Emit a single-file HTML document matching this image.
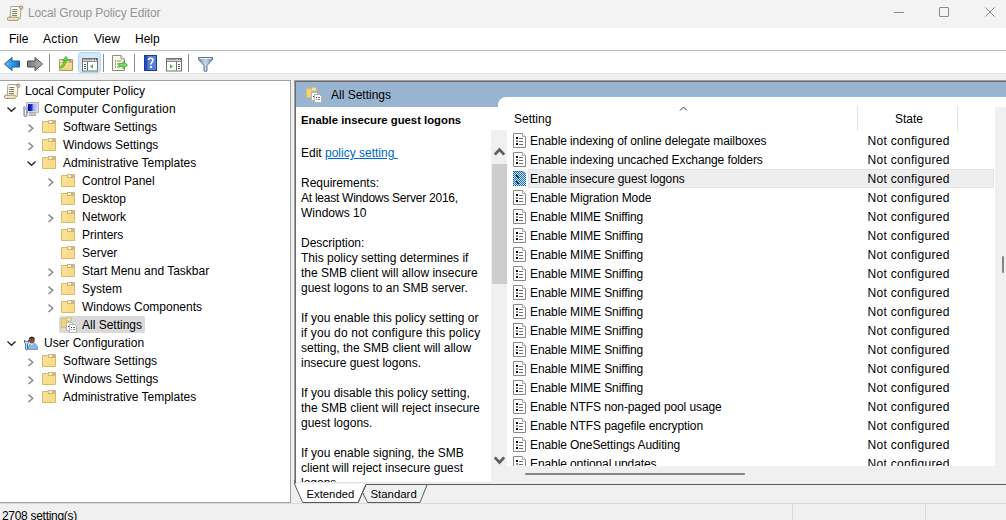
<!DOCTYPE html>
<html><head><meta charset="utf-8">
<style>
*{margin:0;padding:0;box-sizing:border-box}
html,body{width:1006px;height:520px;overflow:hidden;background:#f0f0f0;font-family:"Liberation Sans",sans-serif;font-size:12px;color:#000}
.a{position:absolute}
.t{position:absolute;white-space:nowrap;line-height:12px;font-size:12px}
svg{position:absolute;overflow:visible}
</style></head><body>
<div class="a" style="left:0;top:0;width:1006px;height:28px;background:#f3f3f3"></div>
<svg style="left:5px;top:3.5px" width="20" height="18" viewBox="0 0 20 18" ><path d="M6 2.5H16.2L15.2 14.5H5Z" fill="#f8f3dc" stroke="#aaa38a"/><path d="M6.3 3.2H15.5L15.2 5H6Z" fill="#fcfaee"/><path d="M7.4 5.5H12.2M7.3 7.5H12.1M7.2 9.5H12M7.1 11.5H11.9" stroke="#7c7c7c"/><circle cx="16.3" cy="3.6" r="1.6" fill="#ddd5b5" stroke="#8f8a78"/><rect x="2.3" y="13.2" width="11.6" height="3.2" rx="1.6" fill="#f2e8c4" stroke="#9d9677"/><circle cx="13.2" cy="14.8" r="1" fill="#d3caa6"/></svg>
<div class="t" style="left:28px;top:7px;color:#959595;letter-spacing:-0.12px">Local Group Policy Editor</div>
<div class="a" style="left:894px;top:12px;width:10px;height:1px;background:#8a8a8a"></div>
<div class="a" style="left:939px;top:7px;width:10px;height:10px;border:1px solid #8a8a8a;border-radius:1px"></div>
<svg style="left:985px;top:7px" width="10" height="10"><path d="M0.5 0.5L9.5 9.5M9.5 0.5L0.5 9.5" stroke="#8a8a8a" stroke-width="1"/></svg>
<div class="a" style="left:0;top:28px;width:1006px;height:22px;background:#fff"></div>
<div class="t" style="left:9px;top:33px">File</div>
<div class="t" style="left:43px;top:33px;letter-spacing:0.3px">Action</div>
<div class="t" style="left:94px;top:33px">View</div>
<div class="t" style="left:135px;top:33px">Help</div>
<div class="a" style="left:0;top:50px;width:1006px;height:1px;background:#bcbcbc"></div>
<div class="a" style="left:0;top:51px;width:1006px;height:22px;background:#fff"></div>
<div class="a" style="left:0;top:73px;width:1006px;height:1px;background:#e3e3e3"></div>
<div class="a" style="left:0;top:80px;width:291px;height:423px;background:#fff;border-top:1px solid #a0a0a0;border-right:1px solid #a0a0a0;border-bottom:1px solid #a0a0a0"></div>
<div class="a" style="left:294px;top:80px;width:712px;height:404px;border-top:1px solid #a0a0a0;border-left:1px solid #a0a0a0;background:#696969"></div>
<div class="a" style="left:296px;top:82px;width:710px;height:402px;background:#f0f0f0"></div>
<div class="a" style="left:296px;top:82px;width:710px;height:25px;background:#99b4d1"></div>
<div class="t" style="left:331px;top:89px">All Settings</div>
<svg style="left:3.5px;top:56.5px" width="17" height="15" viewBox="0 0 17 15" ><defs><linearGradient id="gb" x1="0" y1="0" x2="1" y2="0"><stop offset="0" stop-color="#5cc0f5"/><stop offset="1" stop-color="#0f6fc7"/></linearGradient></defs><path d="M0.5 7L8 0.5V4H15.5V10H8V13.5Z" fill="url(#gb)" stroke="#1d5f9e"/></svg>
<svg style="left:26.5px;top:56.5px" width="17" height="15" viewBox="0 0 17 15" ><defs><linearGradient id="gf" x1="0" y1="0" x2="1" y2="0"><stop offset="0" stop-color="#7a7a7a"/><stop offset="1" stop-color="#b5b5b5"/></linearGradient></defs><path d="M15.5 7L8 0.5V4H0.5V10H8V13.5Z" fill="url(#gf)" stroke="#4e4e4e"/></svg>
<div class="a" style="left:49px;top:54px;width:1px;height:18px;background:#8a8a8a"></div>
<svg style="left:59px;top:56px" width="15" height="16" viewBox="0 0 15 16" ><defs><linearGradient id="gup" x1="0" y1="0" x2="0" y2="1"><stop offset="0" stop-color="#fbe6ae"/><stop offset="1" stop-color="#f3cf78"/></linearGradient></defs><path d="M0.5 3.5H13.5V14.5H0.5Z" fill="url(#gup)" stroke="#b8975a"/><path d="M1 4H13V6.5H1Z" fill="#f8edd0"/><path d="M1 6.5H13" stroke="#d9b970"/><rect x="10" y="4" width="2.5" height="2" fill="#a89a80"/><path d="M2.5 11C4.5 9.8 5.8 7.5 6.4 4.6" stroke="#2f9e22" stroke-width="2.6" stroke-linecap="round" fill="none"/><path d="M2.5 11C4.5 9.8 5.8 7.5 6.4 4.6" stroke="#62dc48" stroke-width="1.5" stroke-linecap="round" fill="none"/><path d="M3.4 5L6.8 0.4L9.8 4.6Z" fill="#5fd946" stroke="#2f9e22" stroke-width="0.7"/></svg>
<div class="a" style="left:78px;top:52px;width:23px;height:21px;background:#d3e8f8;border:1px solid #b3d8f5;border-radius:3px"></div>
<svg style="left:82px;top:58px" width="17" height="14" viewBox="0 0 17 14" ><rect x="0.5" y="0.5" width="15" height="12.5" fill="#fff" stroke="#707070"/><rect x="1" y="1" width="14" height="2" fill="#d4d4d4"/><path d="M1.5 1.5H10.5" stroke="#9a9a9a"/><rect x="12" y="1" width="1" height="1" fill="#555"/><rect x="14" y="1" width="1" height="1" fill="#555"/><path d="M1 3.5H15" stroke="#8a8a8a"/><path d="M5.5 4V12.5" stroke="#707070"/><path d="M2 6.5H4M2 8.5H4M2 10.5H4" stroke="#4d5f86"/><path d="M11 6.3L8 8.4L11 10.5Z" fill="#3cb43c"/></svg>
<div class="a" style="left:103px;top:54px;width:1px;height:18px;background:#8a8a8a"></div>
<svg style="left:112px;top:55px" width="17" height="17" viewBox="0 0 17 17" ><path d="M0.5 0.5H9L12.5 4V15.5H0.5Z" fill="#fbf8e6" stroke="#8c8c80"/><path d="M9 0.5V4H12.5" fill="#fff" stroke="#8c8c80"/><rect x="3" y="5.5" width="1" height="1" fill="#333"/><rect x="3" y="8.5" width="1" height="1" fill="#333"/><rect x="3" y="11.5" width="1" height="1" fill="#333"/><path d="M5 6H9M5 9H8M5 12H8" stroke="#888"/><path d="M7 8.5H11V6.5L15.5 10L11 13.5V11.5H7Z" fill="#6fe05a" stroke="#3aa52a" stroke-width="0.8"/></svg>
<div class="a" style="left:134px;top:54px;width:1px;height:18px;background:#8a8a8a"></div>
<svg style="left:144px;top:55px" width="13" height="16" viewBox="0 0 13 16" ><rect x="0.5" y="0.5" width="12" height="15" fill="#5b7fd6" stroke="#1c3a9a"/><rect x="1" y="1" width="2.5" height="14" fill="#2b4fb8"/><path d="M4.5 5C4.5 2.6 9 2.6 9 5C9 7 7 7 7 9.5" stroke="#fff" stroke-width="1.6" fill="none"/><rect x="6.1" y="11" width="1.8" height="2" fill="#fff"/></svg>
<svg style="left:166px;top:58px" width="17" height="14" viewBox="0 0 17 14" ><rect x="0.5" y="0.5" width="15" height="12.5" fill="#fff" stroke="#707070"/><rect x="1" y="1" width="14" height="2" fill="#d4d4d4"/><path d="M1.5 1.5H10.5" stroke="#9a9a9a"/><rect x="12" y="1" width="1" height="1" fill="#555"/><rect x="14" y="1" width="1" height="1" fill="#555"/><path d="M1 3.5H15" stroke="#8a8a8a"/><path d="M10.5 4V12.5" stroke="#707070"/><path d="M12 6.5H14M12 8.5H14M12 10.5H14" stroke="#4d5f86"/><path d="M4 6.3L7 8.4L4 10.5Z" fill="#3cb43c"/></svg>
<div class="a" style="left:188px;top:54px;width:1px;height:18px;background:#8a8a8a"></div>
<svg style="left:198px;top:57px" width="15" height="15" viewBox="0 0 15 15" ><defs><linearGradient id="gfun" x1="0" y1="0" x2="1" y2="0"><stop offset="0" stop-color="#6f8da6"/><stop offset="0.5" stop-color="#c9d8e4"/><stop offset="1" stop-color="#6f8da6"/></linearGradient></defs><path d="M0.5 0.5H14.5V2.5L9 8.5V14L7.5 14.5L6 14V8.5L0.5 2.5Z" fill="url(#gfun)" stroke="#5d7890"/><path d="M1.5 1.5H13.5" stroke="#e8f0f6"/></svg>
<svg style="left:2px;top:82px" width="20" height="18" viewBox="0 0 20 18" ><path d="M6 2.5H16.2L15.2 14.5H5Z" fill="#f8f3dc" stroke="#aaa38a"/><path d="M6.3 3.2H15.5L15.2 5H6Z" fill="#fcfaee"/><path d="M7.4 5.5H12.2M7.3 7.5H12.1M7.2 9.5H12M7.1 11.5H11.9" stroke="#7c7c7c"/><circle cx="16.3" cy="3.6" r="1.6" fill="#ddd5b5" stroke="#8f8a78"/><rect x="2.3" y="13.2" width="11.6" height="3.2" rx="1.6" fill="#f2e8c4" stroke="#9d9677"/><circle cx="13.2" cy="14.8" r="1" fill="#d3caa6"/></svg>
<div class="t" style="left:25px;top:85px;">Local Computer Policy</div>
<svg style="left:5.5px;top:106px" width="11" height="7" viewBox="0 0 11 7" ><path d="M1.5 1.5L5.5 5.2L9.5 1.5" stroke="#262626" stroke-width="1.4" fill="none"/></svg>
<svg style="left:23px;top:102px" width="16" height="14" viewBox="0 0 16 14" ><defs><linearGradient id="scr" x1="0" y1="0" x2="1" y2="0"><stop offset="0" stop-color="#0a0aa8"/><stop offset="0.45" stop-color="#1c3ad8"/><stop offset="0.55" stop-color="#9aa8f0"/><stop offset="1" stop-color="#d0d4f4"/></linearGradient></defs><rect x="3.5" y="0.5" width="12" height="10" fill="#dcdcdc" stroke="#b8b8b8"/><rect x="5" y="2" width="9" height="7" fill="url(#scr)"/><path d="M7 11H12L13 13.5H6Z" fill="#c8c8c8" stroke="#a8a8a8" stroke-width="0.8"/><path d="M1.5 4.5C0.5 5 0.5 6 1 7V13C1 14 1.5 14.5 2.5 14.5C3.5 14.5 4 14 4 13V7C4.5 6 4.5 5 3.5 4.5" fill="#c4cede" stroke="#6a7f9e"/><path d="M2.5 8V13" stroke="#f4f6fa"/></svg>
<div class="t" style="left:44px;top:103px;letter-spacing:0.2px">Computer Configuration</div>
<svg style="left:27px;top:123px" width="8" height="11" viewBox="0 0 8 11" ><path d="M1.5 1.6L5.8 5.3L1.5 9" stroke="#858585" stroke-width="1.4" fill="none"/></svg>
<svg style="left:42px;top:120px" width="14" height="13" viewBox="0 0 14 13" ><path d="M0.5 1.5H6.5V3.5H13.5V12.5H0.5Z" fill="#f9dc8a" stroke="#d8ba66"/><path d="M6.5 0.5H13.5V3.5H6.5Z" fill="#fbeec0" stroke="#cdb47a"/><rect x="10" y="1" width="3" height="2" fill="#c9b99a"/><path d="M1 2H6V11.5H1Z" fill="#fae29c" opacity="0.6"/></svg>
<div class="t" style="left:63px;top:121px;">Software Settings</div>
<svg style="left:27px;top:141px" width="8" height="11" viewBox="0 0 8 11" ><path d="M1.5 1.6L5.8 5.3L1.5 9" stroke="#858585" stroke-width="1.4" fill="none"/></svg>
<svg style="left:42px;top:138px" width="14" height="13" viewBox="0 0 14 13" ><path d="M0.5 1.5H6.5V3.5H13.5V12.5H0.5Z" fill="#f9dc8a" stroke="#d8ba66"/><path d="M6.5 0.5H13.5V3.5H6.5Z" fill="#fbeec0" stroke="#cdb47a"/><rect x="10" y="1" width="3" height="2" fill="#c9b99a"/><path d="M1 2H6V11.5H1Z" fill="#fae29c" opacity="0.6"/></svg>
<div class="t" style="left:63px;top:139px;">Windows Settings</div>
<svg style="left:25.5px;top:160px" width="11" height="7" viewBox="0 0 11 7" ><path d="M1.5 1.5L5.5 5.2L9.5 1.5" stroke="#262626" stroke-width="1.4" fill="none"/></svg>
<svg style="left:42px;top:156px" width="14" height="13" viewBox="0 0 14 13" ><path d="M0.5 1.5H6.5V3.5H13.5V12.5H0.5Z" fill="#f9dc8a" stroke="#d8ba66"/><path d="M6.5 0.5H13.5V3.5H6.5Z" fill="#fbeec0" stroke="#cdb47a"/><rect x="10" y="1" width="3" height="2" fill="#c9b99a"/><path d="M1 2H6V11.5H1Z" fill="#fae29c" opacity="0.6"/></svg>
<div class="t" style="left:63px;top:157px;">Administrative Templates</div>
<svg style="left:46.5px;top:177px" width="8" height="11" viewBox="0 0 8 11" ><path d="M1.5 1.6L5.8 5.3L1.5 9" stroke="#858585" stroke-width="1.4" fill="none"/></svg>
<svg style="left:61px;top:174px" width="14" height="13" viewBox="0 0 14 13" ><path d="M0.5 1.5H6.5V3.5H13.5V12.5H0.5Z" fill="#f9dc8a" stroke="#d8ba66"/><path d="M6.5 0.5H13.5V3.5H6.5Z" fill="#fbeec0" stroke="#cdb47a"/><rect x="10" y="1" width="3" height="2" fill="#c9b99a"/><path d="M1 2H6V11.5H1Z" fill="#fae29c" opacity="0.6"/></svg>
<div class="t" style="left:82px;top:175px;">Control Panel</div>
<svg style="left:61px;top:192px" width="14" height="13" viewBox="0 0 14 13" ><path d="M0.5 1.5H6.5V3.5H13.5V12.5H0.5Z" fill="#f9dc8a" stroke="#d8ba66"/><path d="M6.5 0.5H13.5V3.5H6.5Z" fill="#fbeec0" stroke="#cdb47a"/><rect x="10" y="1" width="3" height="2" fill="#c9b99a"/><path d="M1 2H6V11.5H1Z" fill="#fae29c" opacity="0.6"/></svg>
<div class="t" style="left:82px;top:193px;">Desktop</div>
<svg style="left:46.5px;top:213px" width="8" height="11" viewBox="0 0 8 11" ><path d="M1.5 1.6L5.8 5.3L1.5 9" stroke="#858585" stroke-width="1.4" fill="none"/></svg>
<svg style="left:61px;top:210px" width="14" height="13" viewBox="0 0 14 13" ><path d="M0.5 1.5H6.5V3.5H13.5V12.5H0.5Z" fill="#f9dc8a" stroke="#d8ba66"/><path d="M6.5 0.5H13.5V3.5H6.5Z" fill="#fbeec0" stroke="#cdb47a"/><rect x="10" y="1" width="3" height="2" fill="#c9b99a"/><path d="M1 2H6V11.5H1Z" fill="#fae29c" opacity="0.6"/></svg>
<div class="t" style="left:82px;top:211px;">Network</div>
<svg style="left:61px;top:228px" width="14" height="13" viewBox="0 0 14 13" ><path d="M0.5 1.5H6.5V3.5H13.5V12.5H0.5Z" fill="#f9dc8a" stroke="#d8ba66"/><path d="M6.5 0.5H13.5V3.5H6.5Z" fill="#fbeec0" stroke="#cdb47a"/><rect x="10" y="1" width="3" height="2" fill="#c9b99a"/><path d="M1 2H6V11.5H1Z" fill="#fae29c" opacity="0.6"/></svg>
<div class="t" style="left:82px;top:229px;">Printers</div>
<svg style="left:61px;top:246px" width="14" height="13" viewBox="0 0 14 13" ><path d="M0.5 1.5H6.5V3.5H13.5V12.5H0.5Z" fill="#f9dc8a" stroke="#d8ba66"/><path d="M6.5 0.5H13.5V3.5H6.5Z" fill="#fbeec0" stroke="#cdb47a"/><rect x="10" y="1" width="3" height="2" fill="#c9b99a"/><path d="M1 2H6V11.5H1Z" fill="#fae29c" opacity="0.6"/></svg>
<div class="t" style="left:82px;top:247px;">Server</div>
<svg style="left:46.5px;top:267px" width="8" height="11" viewBox="0 0 8 11" ><path d="M1.5 1.6L5.8 5.3L1.5 9" stroke="#858585" stroke-width="1.4" fill="none"/></svg>
<svg style="left:61px;top:264px" width="14" height="13" viewBox="0 0 14 13" ><path d="M0.5 1.5H6.5V3.5H13.5V12.5H0.5Z" fill="#f9dc8a" stroke="#d8ba66"/><path d="M6.5 0.5H13.5V3.5H6.5Z" fill="#fbeec0" stroke="#cdb47a"/><rect x="10" y="1" width="3" height="2" fill="#c9b99a"/><path d="M1 2H6V11.5H1Z" fill="#fae29c" opacity="0.6"/></svg>
<div class="t" style="left:82px;top:265px;">Start Menu and Taskbar</div>
<svg style="left:46.5px;top:285px" width="8" height="11" viewBox="0 0 8 11" ><path d="M1.5 1.6L5.8 5.3L1.5 9" stroke="#858585" stroke-width="1.4" fill="none"/></svg>
<svg style="left:61px;top:282px" width="14" height="13" viewBox="0 0 14 13" ><path d="M0.5 1.5H6.5V3.5H13.5V12.5H0.5Z" fill="#f9dc8a" stroke="#d8ba66"/><path d="M6.5 0.5H13.5V3.5H6.5Z" fill="#fbeec0" stroke="#cdb47a"/><rect x="10" y="1" width="3" height="2" fill="#c9b99a"/><path d="M1 2H6V11.5H1Z" fill="#fae29c" opacity="0.6"/></svg>
<div class="t" style="left:82px;top:283px;">System</div>
<svg style="left:46.5px;top:303px" width="8" height="11" viewBox="0 0 8 11" ><path d="M1.5 1.6L5.8 5.3L1.5 9" stroke="#858585" stroke-width="1.4" fill="none"/></svg>
<svg style="left:61px;top:300px" width="14" height="13" viewBox="0 0 14 13" ><path d="M0.5 1.5H6.5V3.5H13.5V12.5H0.5Z" fill="#f9dc8a" stroke="#d8ba66"/><path d="M6.5 0.5H13.5V3.5H6.5Z" fill="#fbeec0" stroke="#cdb47a"/><rect x="10" y="1" width="3" height="2" fill="#c9b99a"/><path d="M1 2H6V11.5H1Z" fill="#fae29c" opacity="0.6"/></svg>
<div class="t" style="left:82px;top:301px;">Windows Components</div>
<div class="a" style="left:59px;top:316px;width:86px;height:17px;background:#d9d9d9;border-radius:2px"></div>
<svg style="left:61px;top:317px" width="16" height="16" viewBox="0 0 16 16" ><path d="M0.5 1.5H5.5V10.5H0.5Z" fill="#f3d27a" stroke="#d8be70"/><path d="M5.5 0.5H10.5V4H5.5Z" fill="#f6e2a8" stroke="#d8be70"/><path d="M5.5 5.5H10.5L12.5 7.5V13.5H5.5Z" fill="#fff" stroke="#b4b4b4"/><path d="M8.5 7.5H13.5L15.5 9.5V15.5H8.5Z" fill="#fff" stroke="#b4b4b4"/><rect x="7" y="9" width="1" height="1" fill="#333"/><rect x="10" y="10" width="1" height="1" fill="#333"/><path d="M12 10.5H14" stroke="#8a6a8a"/><rect x="10" y="12" width="1" height="1" fill="#888"/><path d="M12 12.5H14" stroke="#888"/></svg>
<div class="t" style="left:82px;top:319px;">All Settings</div>
<svg style="left:5.5px;top:340px" width="11" height="7" viewBox="0 0 11 7" ><path d="M1.5 1.5L5.5 5.2L9.5 1.5" stroke="#262626" stroke-width="1.4" fill="none"/></svg>
<svg style="left:23px;top:334px" width="16" height="17" viewBox="0 0 16 17" ><path d="M5.5 15.5C5.3 11.5 6.5 9.3 9.5 9.2C12.5 9.3 14.6 11 14.6 15.5Z" fill="#8cb8e4" stroke="#6e9bcc"/><ellipse cx="8.8" cy="6" rx="2.9" ry="3.3" fill="#7d5139"/><path d="M5.8 5.6C5.6 1.8 12 1.8 11.8 5.6C11 3.8 6.6 3.8 5.8 5.6Z" fill="#2b2420"/><path d="M8 9.4L8.8 10.8L9.6 9.4" stroke="#ffffff" stroke-width="1" fill="none"/><path d="M1.5 6V8.6L2.7 10V15.2C2.7 16.3 4.5 16.3 4.5 15.2V10L5.6 8.6V6L4.5 7.6H2.7Z" fill="#dfe9f5" stroke="#3e6ba6" stroke-width="1"/></svg>
<div class="t" style="left:44px;top:337px;">User Configuration</div>
<svg style="left:27px;top:357px" width="8" height="11" viewBox="0 0 8 11" ><path d="M1.5 1.6L5.8 5.3L1.5 9" stroke="#858585" stroke-width="1.4" fill="none"/></svg>
<svg style="left:42px;top:354px" width="14" height="13" viewBox="0 0 14 13" ><path d="M0.5 1.5H6.5V3.5H13.5V12.5H0.5Z" fill="#f9dc8a" stroke="#d8ba66"/><path d="M6.5 0.5H13.5V3.5H6.5Z" fill="#fbeec0" stroke="#cdb47a"/><rect x="10" y="1" width="3" height="2" fill="#c9b99a"/><path d="M1 2H6V11.5H1Z" fill="#fae29c" opacity="0.6"/></svg>
<div class="t" style="left:63px;top:355px;">Software Settings</div>
<svg style="left:27px;top:375px" width="8" height="11" viewBox="0 0 8 11" ><path d="M1.5 1.6L5.8 5.3L1.5 9" stroke="#858585" stroke-width="1.4" fill="none"/></svg>
<svg style="left:42px;top:372px" width="14" height="13" viewBox="0 0 14 13" ><path d="M0.5 1.5H6.5V3.5H13.5V12.5H0.5Z" fill="#f9dc8a" stroke="#d8ba66"/><path d="M6.5 0.5H13.5V3.5H6.5Z" fill="#fbeec0" stroke="#cdb47a"/><rect x="10" y="1" width="3" height="2" fill="#c9b99a"/><path d="M1 2H6V11.5H1Z" fill="#fae29c" opacity="0.6"/></svg>
<div class="t" style="left:63px;top:373px;">Windows Settings</div>
<svg style="left:27px;top:393px" width="8" height="11" viewBox="0 0 8 11" ><path d="M1.5 1.6L5.8 5.3L1.5 9" stroke="#858585" stroke-width="1.4" fill="none"/></svg>
<svg style="left:42px;top:390px" width="14" height="13" viewBox="0 0 14 13" ><path d="M0.5 1.5H6.5V3.5H13.5V12.5H0.5Z" fill="#f9dc8a" stroke="#d8ba66"/><path d="M6.5 0.5H13.5V3.5H6.5Z" fill="#fbeec0" stroke="#cdb47a"/><rect x="10" y="1" width="3" height="2" fill="#c9b99a"/><path d="M1 2H6V11.5H1Z" fill="#fae29c" opacity="0.6"/></svg>
<div class="t" style="left:63px;top:391px;">Administrative Templates</div>
<svg style="left:306px;top:87px" width="16" height="16" viewBox="0 0 16 16" ><path d="M0.5 1.5H5.5V10.5H0.5Z" fill="#f3d27a" stroke="#d8be70"/><path d="M5.5 0.5H10.5V4H5.5Z" fill="#f6e2a8" stroke="#d8be70"/><path d="M5.5 5.5H10.5L12.5 7.5V13.5H5.5Z" fill="#fff" stroke="#b4b4b4"/><path d="M8.5 7.5H13.5L15.5 9.5V15.5H8.5Z" fill="#fff" stroke="#b4b4b4"/><rect x="7" y="9" width="1" height="1" fill="#333"/><rect x="10" y="10" width="1" height="1" fill="#333"/><path d="M12 10.5H14" stroke="#8a6a8a"/><rect x="10" y="12" width="1" height="1" fill="#888"/><path d="M12 12.5H14" stroke="#888"/></svg>
<div class="a" style="left:296px;top:107px;width:202px;height:375px;background:#fff;overflow:hidden"><div class="t" style="left:5px;top:7px;font-weight:bold;font-size:11.3px">Enable insecure guest logons</div><div class="t" style="left:5px;top:40px">Edit <span style="color:#0066cc;text-decoration:underline">policy setting&nbsp;</span></div><div class="t" style="left:5px;top:70px">Requirements:</div><div class="t" style="left:5px;top:85px;letter-spacing:-0.25px">At least Windows Server 2016,</div><div class="t" style="left:5px;top:100px">Windows 10</div><div class="t" style="left:5px;top:130px">Description:</div><div class="t" style="left:5px;top:145px">This policy setting determines if</div><div class="t" style="left:5px;top:160px">the SMB client will allow insecure</div><div class="t" style="left:5px;top:175px">guest logons to an SMB server.</div><div class="t" style="left:5px;top:205px">If you enable this policy setting or</div><div class="t" style="left:5px;top:220px;letter-spacing:0.15px">if you do not configure this policy</div><div class="t" style="left:5px;top:235px">setting, the SMB client will allow</div><div class="t" style="left:5px;top:250px">insecure guest logons.</div><div class="t" style="left:5px;top:280px">If you disable this policy setting,</div><div class="t" style="left:5px;top:295px">the SMB client will reject insecure</div><div class="t" style="left:5px;top:310px">guest logons.</div><div class="t" style="left:5px;top:340px">If you enable signing, the SMB</div><div class="t" style="left:5px;top:355px">client will reject insecure guest</div><div class="t" style="left:5px;top:370px">logons.</div></div>
<div class="a" style="left:498px;top:97px;width:508px;height:385px;background:#fff;border-top-left-radius:8px"></div>
<div class="a" style="left:491px;top:130px;width:16px;height:352px;background:#f0f0f0"></div>
<div class="a" style="left:492px;top:164px;width:15px;height:120px;background:#cdcdcd"></div>
<svg style="left:493px;top:146px" width="13" height="11" viewBox="0 0 13 11" ><path d="M1.8 8.6L6.5 3.6L11.2 8.6" stroke="#606060" stroke-width="2.8" fill="none"/></svg>
<svg style="left:493px;top:455px" width="13" height="11" viewBox="0 0 13 11" ><path d="M1.8 2.4L6.5 7.4L11.2 2.4" stroke="#606060" stroke-width="2.8" fill="none"/></svg>
<div class="a" style="left:507px;top:466px;width:499px;height:16px;background:#f0f0f0"></div>
<div class="a" style="left:995px;top:107px;width:11px;height:375px;background:#f0f0f0"></div>
<div class="a" style="left:1002px;top:256px;width:2px;height:17px;background:#858585;border-radius:1px"></div>
<div class="a" style="left:525px;top:473px;width:220px;height:2px;background:#858585;border-radius:1px"></div>
<div class="t" style="left:514px;top:113px;">Setting</div>
<svg style="left:679px;top:106px" width="10" height="6" viewBox="0 0 10 6" ><path d="M1 4.5L4.5 1L8 4.5" stroke="#333" stroke-width="1" fill="none"/></svg>
<div class="a" style="left:857px;top:106px;width:1px;height:25px;background:#e5e5e5"></div>
<div class="a" style="left:957px;top:106px;width:1px;height:25px;background:#e5e5e5"></div>
<div class="t" style="left:895px;top:113px;">State</div>
<div class="a" style="left:507px;top:131px;width:488px;height:335px;overflow:hidden"><svg style="left:6px;top:2px" width="13" height="15" viewBox="0 0 13 15" ><path d="M0.5 0.5H9.5L12.5 3.5V14.5H0.5Z" fill="#fff" stroke="#888"/><path d="M9.5 0.5V3.5H12.5" fill="#fff" stroke="#aaa"/><rect x="3" y="4" width="2" height="2" fill="#000"/><rect x="3" y="7" width="2" height="2" fill="#8a8a8a"/><rect x="3" y="10" width="2" height="2" fill="#000"/><path d="M6 5.5H10M6 8.5H10M6 11.5H10" stroke="#6a6a6a"/></svg><div class="t" style="left:23px;top:4px;letter-spacing:-0.1px">Enable indexing of online delegate mailboxes</div><div class="t" style="left:360.5px;top:4px;letter-spacing:0.3px">Not configured</div><svg style="left:6px;top:21px" width="13" height="15" viewBox="0 0 13 15" ><path d="M0.5 0.5H9.5L12.5 3.5V14.5H0.5Z" fill="#fff" stroke="#888"/><path d="M9.5 0.5V3.5H12.5" fill="#fff" stroke="#aaa"/><rect x="3" y="4" width="2" height="2" fill="#000"/><rect x="3" y="7" width="2" height="2" fill="#8a8a8a"/><rect x="3" y="10" width="2" height="2" fill="#000"/><path d="M6 5.5H10M6 8.5H10M6 11.5H10" stroke="#6a6a6a"/></svg><div class="t" style="left:23px;top:23px;letter-spacing:-0.1px">Enable indexing uncached Exchange folders</div><div class="t" style="left:360.5px;top:23px;letter-spacing:0.3px">Not configured</div><div class="a" style="left:21px;top:38px;width:466px;height:19px;background:#eeeeee;border:1px solid #e4e4e4"></div><svg style="left:6px;top:40px" width="13" height="15" viewBox="0 0 13 15" ><defs><pattern id="chk" width="2" height="2" patternUnits="userSpaceOnUse"><rect width="2" height="2" fill="#c4ecfb"/><rect width="1" height="1" fill="#2566b0"/><rect x="1" y="1" width="1" height="1" fill="#2566b0"/></pattern></defs><path d="M0 0H10L13 3V15H0Z" fill="url(#chk)"/><path d="M0.5 0.5H10L12.5 3V14.5H0.5Z" fill="none" stroke="#1d4f8f" stroke-dasharray="1 1" opacity="0.8"/><path d="M3 4L5.6 6.8M3 10.2L5.6 13" stroke="#062c66" stroke-width="1.5"/></svg><div class="t" style="left:23px;top:42px;letter-spacing:-0.1px">Enable insecure guest logons</div><div class="t" style="left:360.5px;top:42px;letter-spacing:0.3px">Not configured</div><svg style="left:6px;top:59px" width="13" height="15" viewBox="0 0 13 15" ><path d="M0.5 0.5H9.5L12.5 3.5V14.5H0.5Z" fill="#fff" stroke="#888"/><path d="M9.5 0.5V3.5H12.5" fill="#fff" stroke="#aaa"/><rect x="3" y="4" width="2" height="2" fill="#000"/><rect x="3" y="7" width="2" height="2" fill="#8a8a8a"/><rect x="3" y="10" width="2" height="2" fill="#000"/><path d="M6 5.5H10M6 8.5H10M6 11.5H10" stroke="#6a6a6a"/></svg><div class="t" style="left:23px;top:61px;letter-spacing:-0.1px">Enable Migration Mode</div><div class="t" style="left:360.5px;top:61px;letter-spacing:0.3px">Not configured</div><svg style="left:6px;top:78px" width="13" height="15" viewBox="0 0 13 15" ><path d="M0.5 0.5H9.5L12.5 3.5V14.5H0.5Z" fill="#fff" stroke="#888"/><path d="M9.5 0.5V3.5H12.5" fill="#fff" stroke="#aaa"/><rect x="3" y="4" width="2" height="2" fill="#000"/><rect x="3" y="7" width="2" height="2" fill="#8a8a8a"/><rect x="3" y="10" width="2" height="2" fill="#000"/><path d="M6 5.5H10M6 8.5H10M6 11.5H10" stroke="#6a6a6a"/></svg><div class="t" style="left:23px;top:80px;letter-spacing:-0.1px">Enable MIME Sniffing</div><div class="t" style="left:360.5px;top:80px;letter-spacing:0.3px">Not configured</div><svg style="left:6px;top:97px" width="13" height="15" viewBox="0 0 13 15" ><path d="M0.5 0.5H9.5L12.5 3.5V14.5H0.5Z" fill="#fff" stroke="#888"/><path d="M9.5 0.5V3.5H12.5" fill="#fff" stroke="#aaa"/><rect x="3" y="4" width="2" height="2" fill="#000"/><rect x="3" y="7" width="2" height="2" fill="#8a8a8a"/><rect x="3" y="10" width="2" height="2" fill="#000"/><path d="M6 5.5H10M6 8.5H10M6 11.5H10" stroke="#6a6a6a"/></svg><div class="t" style="left:23px;top:99px;letter-spacing:-0.1px">Enable MIME Sniffing</div><div class="t" style="left:360.5px;top:99px;letter-spacing:0.3px">Not configured</div><svg style="left:6px;top:116px" width="13" height="15" viewBox="0 0 13 15" ><path d="M0.5 0.5H9.5L12.5 3.5V14.5H0.5Z" fill="#fff" stroke="#888"/><path d="M9.5 0.5V3.5H12.5" fill="#fff" stroke="#aaa"/><rect x="3" y="4" width="2" height="2" fill="#000"/><rect x="3" y="7" width="2" height="2" fill="#8a8a8a"/><rect x="3" y="10" width="2" height="2" fill="#000"/><path d="M6 5.5H10M6 8.5H10M6 11.5H10" stroke="#6a6a6a"/></svg><div class="t" style="left:23px;top:118px;letter-spacing:-0.1px">Enable MIME Sniffing</div><div class="t" style="left:360.5px;top:118px;letter-spacing:0.3px">Not configured</div><svg style="left:6px;top:135px" width="13" height="15" viewBox="0 0 13 15" ><path d="M0.5 0.5H9.5L12.5 3.5V14.5H0.5Z" fill="#fff" stroke="#888"/><path d="M9.5 0.5V3.5H12.5" fill="#fff" stroke="#aaa"/><rect x="3" y="4" width="2" height="2" fill="#000"/><rect x="3" y="7" width="2" height="2" fill="#8a8a8a"/><rect x="3" y="10" width="2" height="2" fill="#000"/><path d="M6 5.5H10M6 8.5H10M6 11.5H10" stroke="#6a6a6a"/></svg><div class="t" style="left:23px;top:137px;letter-spacing:-0.1px">Enable MIME Sniffing</div><div class="t" style="left:360.5px;top:137px;letter-spacing:0.3px">Not configured</div><svg style="left:6px;top:154px" width="13" height="15" viewBox="0 0 13 15" ><path d="M0.5 0.5H9.5L12.5 3.5V14.5H0.5Z" fill="#fff" stroke="#888"/><path d="M9.5 0.5V3.5H12.5" fill="#fff" stroke="#aaa"/><rect x="3" y="4" width="2" height="2" fill="#000"/><rect x="3" y="7" width="2" height="2" fill="#8a8a8a"/><rect x="3" y="10" width="2" height="2" fill="#000"/><path d="M6 5.5H10M6 8.5H10M6 11.5H10" stroke="#6a6a6a"/></svg><div class="t" style="left:23px;top:156px;letter-spacing:-0.1px">Enable MIME Sniffing</div><div class="t" style="left:360.5px;top:156px;letter-spacing:0.3px">Not configured</div><svg style="left:6px;top:173px" width="13" height="15" viewBox="0 0 13 15" ><path d="M0.5 0.5H9.5L12.5 3.5V14.5H0.5Z" fill="#fff" stroke="#888"/><path d="M9.5 0.5V3.5H12.5" fill="#fff" stroke="#aaa"/><rect x="3" y="4" width="2" height="2" fill="#000"/><rect x="3" y="7" width="2" height="2" fill="#8a8a8a"/><rect x="3" y="10" width="2" height="2" fill="#000"/><path d="M6 5.5H10M6 8.5H10M6 11.5H10" stroke="#6a6a6a"/></svg><div class="t" style="left:23px;top:175px;letter-spacing:-0.1px">Enable MIME Sniffing</div><div class="t" style="left:360.5px;top:175px;letter-spacing:0.3px">Not configured</div><svg style="left:6px;top:192px" width="13" height="15" viewBox="0 0 13 15" ><path d="M0.5 0.5H9.5L12.5 3.5V14.5H0.5Z" fill="#fff" stroke="#888"/><path d="M9.5 0.5V3.5H12.5" fill="#fff" stroke="#aaa"/><rect x="3" y="4" width="2" height="2" fill="#000"/><rect x="3" y="7" width="2" height="2" fill="#8a8a8a"/><rect x="3" y="10" width="2" height="2" fill="#000"/><path d="M6 5.5H10M6 8.5H10M6 11.5H10" stroke="#6a6a6a"/></svg><div class="t" style="left:23px;top:194px;letter-spacing:-0.1px">Enable MIME Sniffing</div><div class="t" style="left:360.5px;top:194px;letter-spacing:0.3px">Not configured</div><svg style="left:6px;top:211px" width="13" height="15" viewBox="0 0 13 15" ><path d="M0.5 0.5H9.5L12.5 3.5V14.5H0.5Z" fill="#fff" stroke="#888"/><path d="M9.5 0.5V3.5H12.5" fill="#fff" stroke="#aaa"/><rect x="3" y="4" width="2" height="2" fill="#000"/><rect x="3" y="7" width="2" height="2" fill="#8a8a8a"/><rect x="3" y="10" width="2" height="2" fill="#000"/><path d="M6 5.5H10M6 8.5H10M6 11.5H10" stroke="#6a6a6a"/></svg><div class="t" style="left:23px;top:213px;letter-spacing:-0.1px">Enable MIME Sniffing</div><div class="t" style="left:360.5px;top:213px;letter-spacing:0.3px">Not configured</div><svg style="left:6px;top:230px" width="13" height="15" viewBox="0 0 13 15" ><path d="M0.5 0.5H9.5L12.5 3.5V14.5H0.5Z" fill="#fff" stroke="#888"/><path d="M9.5 0.5V3.5H12.5" fill="#fff" stroke="#aaa"/><rect x="3" y="4" width="2" height="2" fill="#000"/><rect x="3" y="7" width="2" height="2" fill="#8a8a8a"/><rect x="3" y="10" width="2" height="2" fill="#000"/><path d="M6 5.5H10M6 8.5H10M6 11.5H10" stroke="#6a6a6a"/></svg><div class="t" style="left:23px;top:232px;letter-spacing:-0.1px">Enable MIME Sniffing</div><div class="t" style="left:360.5px;top:232px;letter-spacing:0.3px">Not configured</div><svg style="left:6px;top:249px" width="13" height="15" viewBox="0 0 13 15" ><path d="M0.5 0.5H9.5L12.5 3.5V14.5H0.5Z" fill="#fff" stroke="#888"/><path d="M9.5 0.5V3.5H12.5" fill="#fff" stroke="#aaa"/><rect x="3" y="4" width="2" height="2" fill="#000"/><rect x="3" y="7" width="2" height="2" fill="#8a8a8a"/><rect x="3" y="10" width="2" height="2" fill="#000"/><path d="M6 5.5H10M6 8.5H10M6 11.5H10" stroke="#6a6a6a"/></svg><div class="t" style="left:23px;top:251px;letter-spacing:-0.1px">Enable MIME Sniffing</div><div class="t" style="left:360.5px;top:251px;letter-spacing:0.3px">Not configured</div><svg style="left:6px;top:268px" width="13" height="15" viewBox="0 0 13 15" ><path d="M0.5 0.5H9.5L12.5 3.5V14.5H0.5Z" fill="#fff" stroke="#888"/><path d="M9.5 0.5V3.5H12.5" fill="#fff" stroke="#aaa"/><rect x="3" y="4" width="2" height="2" fill="#000"/><rect x="3" y="7" width="2" height="2" fill="#8a8a8a"/><rect x="3" y="10" width="2" height="2" fill="#000"/><path d="M6 5.5H10M6 8.5H10M6 11.5H10" stroke="#6a6a6a"/></svg><div class="t" style="left:23px;top:270px;letter-spacing:-0.1px">Enable NTFS non-paged pool usage</div><div class="t" style="left:360.5px;top:270px;letter-spacing:0.3px">Not configured</div><svg style="left:6px;top:287px" width="13" height="15" viewBox="0 0 13 15" ><path d="M0.5 0.5H9.5L12.5 3.5V14.5H0.5Z" fill="#fff" stroke="#888"/><path d="M9.5 0.5V3.5H12.5" fill="#fff" stroke="#aaa"/><rect x="3" y="4" width="2" height="2" fill="#000"/><rect x="3" y="7" width="2" height="2" fill="#8a8a8a"/><rect x="3" y="10" width="2" height="2" fill="#000"/><path d="M6 5.5H10M6 8.5H10M6 11.5H10" stroke="#6a6a6a"/></svg><div class="t" style="left:23px;top:289px;letter-spacing:-0.1px">Enable NTFS pagefile encryption</div><div class="t" style="left:360.5px;top:289px;letter-spacing:0.3px">Not configured</div><svg style="left:6px;top:306px" width="13" height="15" viewBox="0 0 13 15" ><path d="M0.5 0.5H9.5L12.5 3.5V14.5H0.5Z" fill="#fff" stroke="#888"/><path d="M9.5 0.5V3.5H12.5" fill="#fff" stroke="#aaa"/><rect x="3" y="4" width="2" height="2" fill="#000"/><rect x="3" y="7" width="2" height="2" fill="#8a8a8a"/><rect x="3" y="10" width="2" height="2" fill="#000"/><path d="M6 5.5H10M6 8.5H10M6 11.5H10" stroke="#6a6a6a"/></svg><div class="t" style="left:23px;top:308px;letter-spacing:-0.1px">Enable OneSettings Auditing</div><div class="t" style="left:360.5px;top:308px;letter-spacing:0.3px">Not configured</div><svg style="left:6px;top:325px" width="13" height="15" viewBox="0 0 13 15" ><path d="M0.5 0.5H9.5L12.5 3.5V14.5H0.5Z" fill="#fff" stroke="#888"/><path d="M9.5 0.5V3.5H12.5" fill="#fff" stroke="#aaa"/><rect x="3" y="4" width="2" height="2" fill="#000"/><rect x="3" y="7" width="2" height="2" fill="#8a8a8a"/><rect x="3" y="10" width="2" height="2" fill="#000"/><path d="M6 5.5H10M6 8.5H10M6 11.5H10" stroke="#6a6a6a"/></svg><div class="t" style="left:23px;top:327px;letter-spacing:-0.1px">Enable optional updates</div><div class="t" style="left:360.5px;top:327px;letter-spacing:0.3px">Not configured</div></div>
<div class="a" style="left:296px;top:482px;width:710px;height:3px;background:#f0f0f0"></div>
<div class="a" style="left:296px;top:482px;width:195px;height:1px;background:#e6e6e6"></div>
<div class="a" style="left:294px;top:484px;width:712px;height:18px;background:#f0f0f0"></div>
<div class="a" style="left:360px;top:484px;width:646px;height:1px;background:#5a5a5a"></div>
<div class="a" style="left:294px;top:480px;width:2px;height:4px;background:#696969"></div>
<svg style="left:294px;top:484px" width="140" height="20" viewBox="0 0 140 20" ><path d="M0 0H72V1H0Z" fill="#fff"/><path d="M0.3 -0.5L8.7 18.5H64.2L72 0.5" fill="#fff" stroke="#5a5a5a"/><path d="M72 0.5H133.2L126 18.5H73.5L68.6 8.5Z" fill="#f0f0f0" stroke="#5a5a5a"/><path d="M64.2 18.5L72 0.5" fill="none" stroke="#5a5a5a"/></svg>
<div class="t" style="left:306.5px;top:488px;font-size:11.3px">Extended</div>
<div class="t" style="left:370.5px;top:488px;font-size:11.4px">Standard</div>

<div class="a" style="left:0;top:503px;width:1006px;height:1px;background:#d9d9d9"></div>
<div class="t" style="left:2px;top:510px;letter-spacing:-0.3px">2708 setting(s)</div>
<div class="a" style="left:792px;top:503px;width:1px;height:17px;background:#d9d9d9"></div>
<div class="a" style="left:925px;top:503px;width:1px;height:17px;background:#d9d9d9"></div>
</body></html>
